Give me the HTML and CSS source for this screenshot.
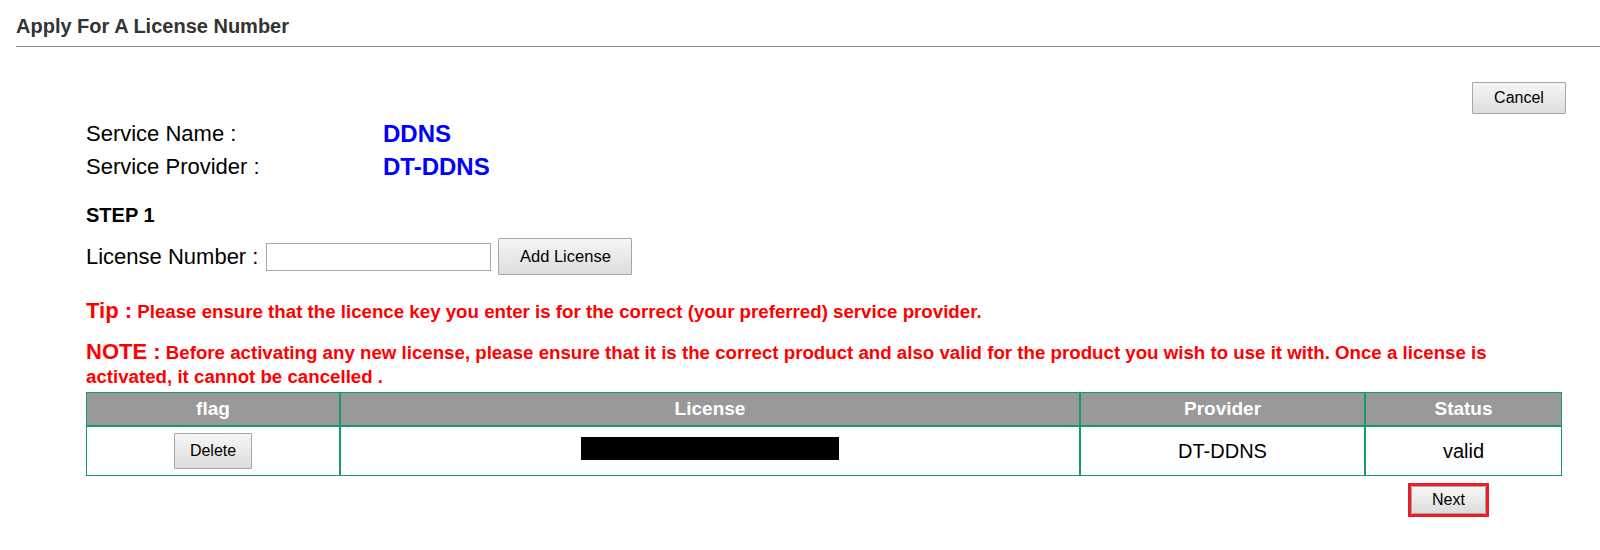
FILE: index.html
```html
<!DOCTYPE html>
<html lang="en">
<head>
  <meta charset="UTF-8">
  <title>Apply For A License Number</title>
  <link rel="stylesheet" href="styles.css">
</head>
<body>
  <h1 class="page-title">Apply For A License Number</h1>

  <div class="toolbar">
    <button type="button" class="btn btn-cancel">Cancel</button>
  </div>

  <div class="content">
    <div class="service-info">
      <span class="info-label">Service Name :</span>
      <span class="info-value">DDNS</span>
      <span class="info-label">Service Provider :</span>
      <span class="info-value">DT-DDNS</span>
    </div>

    <h2 class="step-title">STEP 1</h2>
    <div class="license-row">
      <label for="licenseNumber">License Number :</label>
      <input type="text" id="licenseNumber" class="license-input">
      <button type="button" class="btn btn-add">Add License</button>
    </div>

    <p class="tip"><span class="tip-head">Tip :</span> Please ensure that the licence key you enter is for the correct (your preferred) service provider.</p>
    <p class="note"><span class="tip-head">NOTE :</span> <span>Before activating any new license, please ensure that it is the correct product and also valid for the product you wish to use it with. Once a license is</span><br><span>activated, it cannot be cancelled .</span></p>

    <table class="license-table">
      <thead>
        <tr>
          <th class="col-flag">flag</th>
          <th class="col-license">License</th>
          <th class="col-provider">Provider</th>
          <th class="col-status">Status</th>
        </tr>
      </thead>
      <tbody>
        <tr>
          <td><button type="button" class="btn btn-delete">Delete</button></td>
          <td><span class="masked"></span></td>
          <td>DT-DDNS</td>
          <td>valid</td>
        </tr>
      </tbody>
    </table>

    <div class="actions">
      <span class="next-frame">
        <button type="button" class="btn btn-next">Next</button>
      </span>
    </div>
  </div>
</body>
</html>
```

FILE: styles.css
```css
body {
  margin: 0;
  font-family: "Liberation Sans", Arial, sans-serif;
  color: #000;
  background: #fff;
}
.page-title {
  margin: 0 0 0 16px;
  padding: 14px 0 8px;
  font-size: 20px;
  line-height: 24px;
  font-weight: bold;
  color: #333;
  border-bottom: 1px solid #8a8a8a;
}
.toolbar {
  display: flex;
  justify-content: flex-end;
  padding-right: 34px;
  margin-top: 35px;
}
.btn {
  font-family: "Liberation Sans", Arial, sans-serif;
  font-size: 16px;
  color: #000;
  background: linear-gradient(#f6f6f6, #dddddd);
  border: 1px solid #a6a6a6;
  border-radius: 1px;
  padding: 0;
  cursor: pointer;
}
.btn-cancel {
  width: 94px;
  height: 32px;
}
.content {
  padding: 0 38px 0 86px;
}
.service-info {
  display: grid;
  grid-template-columns: 297px auto;
  margin-top: 3px;
}
.info-label {
  font-size: 22px;
  line-height: 33px;
}
.info-value {
  font-size: 24px;
  line-height: 33px;
  font-weight: bold;
  color: #0000ff;
}
.step-title {
  margin: 20px 0 0;
  font-size: 20px;
  line-height: 24px;
}
.license-row {
  display: flex;
  align-items: center;
  margin-top: 11px;
  font-size: 22px;
}
.license-input {
  width: 225px;
  height: 28px;
  box-sizing: border-box;
  margin-left: 8px;
  border: 1px solid #a9a9a9;
}
.btn-add {
  width: 134px;
  height: 37px;
  margin-left: 7px;
  font-size: 16.5px;
}
.tip,
.note {
  margin: 0;
  font-size: 18.7px;
  font-weight: bold;
  line-height: 25px;
  color: #ff0000;
}
.tip {
  margin-top: 24px;
}
.note {
  margin-top: 17px;
  line-height: 24px;
}
.tip-head {
  font-size: 22px;
  line-height: 1;
}
.license-table {
  width: 100%;
  margin-top: 3px;
  border-collapse: separate;
  border-spacing: 0;
  font-size: 20px;
}
.license-table th,
.license-table td {
  border: 1px solid #139b6b;
  text-align: center;
  padding: 0;
}
.license-table th {
  height: 32px;
  background: #999999;
  color: #fff;
  font-size: 19px;
  font-weight: bold;
}
.license-table td {
  height: 48px;
}
.col-flag { width: 252px; }
.col-license { width: 738px; }
.col-provider { width: 283px; }
.btn-delete {
  width: 78px;
  height: 36px;
  vertical-align: middle;
}
.masked {
  display: inline-block;
  width: 258px;
  height: 23px;
  background: #000;
  vertical-align: middle;
  margin-top: -8px;
}
.actions {
  display: flex;
  justify-content: flex-end;
  padding-right: 73px;
  margin-top: 7px;
}
.next-frame {
  display: flex;
  border: 3px solid #ee1c25;
}
.btn-next {
  width: 75px;
  height: 28px;
}
```
